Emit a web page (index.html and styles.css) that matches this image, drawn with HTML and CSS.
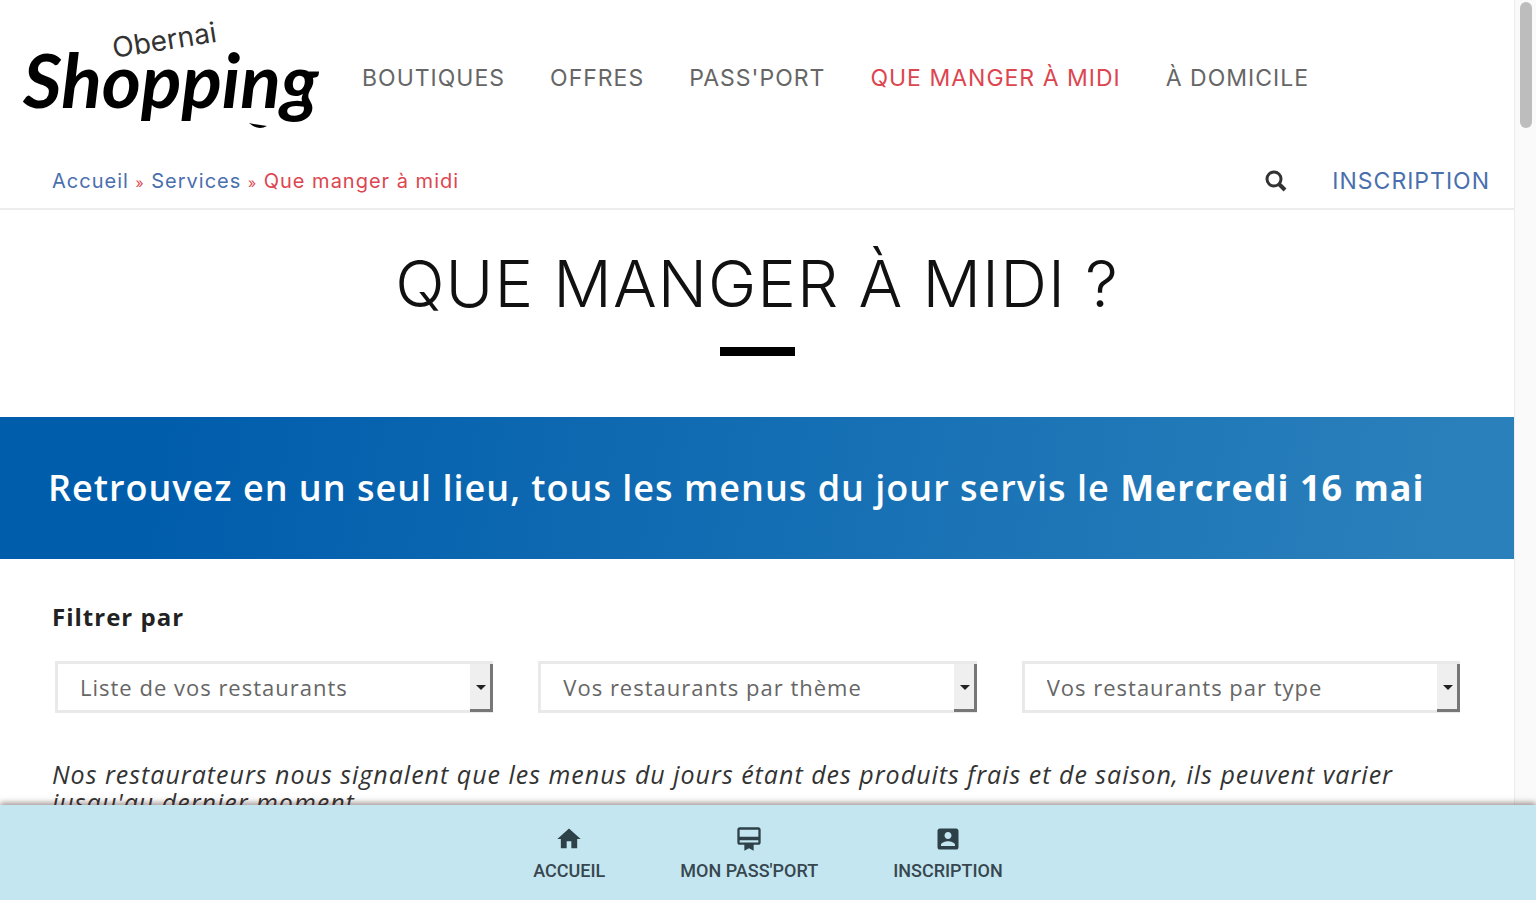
FILE: index.html
```html
<!DOCTYPE html>
<html lang="fr">
<head>
<meta charset="utf-8">
<meta name="viewport" content="width=device-width, initial-scale=1">
<title>Que manger à midi ? – Obernai Shopping</title>
<link rel="stylesheet" href="styles.css">
</head>
<body>
<div class="app">
  <div class="viewport">
    <div class="page">
      <header class="header">
        <div class="header-main">
          <a class="logo" href="#" aria-label="Obernai Shopping">
            <svg class="logo-art" viewBox="0 0 300 120" aria-hidden="true">
              <text class="logo-town" x="94" y="40" transform="rotate(-9 94 40)">Obernai</text>
              <text class="logo-word" x="3" y="90">Shopping</text>
              <path d="M229 105q9 8 18 3q-9 -1 -18 -3z" fill="#000"/>
            </svg>
          </a>
          <nav class="nav" aria-label="Navigation principale">
            <a href="#">BOUTIQUES</a>
            <a href="#">OFFRES</a>
            <a href="#">PASS'PORT</a>
            <a class="is-active" href="#">QUE MANGER À MIDI</a>
            <a href="#">À DOMICILE</a>
          </nav>
        </div>
        <div class="header-sub">
          <nav class="crumbs" aria-label="Fil d'Ariane">
            <a href="#">Accueil</a> <span class="sep">»</span> <a href="#">Services</a> <span class="sep">»</span> <span>Que manger à midi</span>
          </nav>
          <div class="tools">
            <button class="search" type="button" aria-label="Rechercher">
              <svg viewBox="0 0 22 22" width="22" height="22" aria-hidden="true">
                <circle cx="9" cy="9" r="7" fill="none" stroke="#333" stroke-width="3"/>
                <path d="M14 14l6 6" fill="none" stroke="#333" stroke-width="4"/>
              </svg>
            </button>
            <a class="signup" href="#">INSCRIPTION</a>
          </div>
        </div>
      </header>
      <main>
        <div class="title">
          <h1>QUE MANGER À MIDI ?</h1>
        </div>
        <p class="banner">Retrouvez en un seul lieu, tous les menus du jour servis le <strong>Mercredi 16 mai</strong></p>
        <section class="filters">
          <h2>Filtrer par</h2>
          <div class="filter-row">
            <div class="picker">
              <select aria-label="Liste de vos restaurants"><option>Liste de vos restaurants</option></select>
            </div>
            <div class="picker">
              <select aria-label="Vos restaurants par thème"><option>Vos restaurants par thème</option></select>
            </div>
            <div class="picker">
              <select aria-label="Vos restaurants par type"><option>Vos restaurants par type</option></select>
            </div>
          </div>
          <p class="note">Nos restaurateurs nous signalent que les menus du jours étant des produits frais et de saison, ils peuvent varier jusqu'au dernier moment.</p>
        </section>
      </main>
    </div>
    <div class="scrollbar" aria-hidden="true"><div class="thumb"></div></div>
  </div>
  <nav class="tabbar" aria-label="Raccourcis">
    <a href="#">
      <svg viewBox="0 0 24 24" aria-hidden="true"><path d="M10 20v-6h4v6h5v-8h3L12 3 2 12h3v8z"/></svg>
      <span>ACCUEIL</span>
    </a>
    <a href="#">
      <svg viewBox="0 0 24 24" aria-hidden="true"><path d="M20 2H4c-1.110 0-2 .89-2 2v11c0 1.110.89 2 2 2h4v5l4-2 4 2v-5h4c1.110 0 2-.89 2-2V4c0-1.110-.89-2-2-2zm0 13H4v-2h16v2zm0-5H4V4h16v6z"/></svg>
      <span>MON PASS'PORT</span>
    </a>
    <a href="#">
      <svg viewBox="0 0 24 24" aria-hidden="true"><path d="M3 5v14c0 1.100.89 2 2 2h14c1.100 0 2-.9 2-2V5c0-1.100-.9-2-2-2H5c-1.110 0-2 .9-2 2zm12 4c0 1.660-1.340 3-3 3s-3-1.340-3-3 1.340-3 3-3 3 1.340 3 3zm-9 8c0-2 4-3.100 6-3.100s6 1.100 6 3.100v1H6v-1z"/></svg>
      <span>INSCRIPTION</span>
    </a>
  </nav>
</div>
</body>
</html>
```
FILE: styles.css
```css
:root {
  --tracking: 1px;
  --blue: #4a6fae;
  --red: #dc4650;
  --geo: Inter, Lato, sans-serif;
  --text: "Open Sans", "Noto Sans", sans-serif;
}

* { box-sizing: border-box; }

body {
  margin: 0;
  background: #fff;
  color: #222;
  font-family: var(--text);
  letter-spacing: var(--tracking);
}

a { color: inherit; text-decoration: none; }

.app {
  display: flex;
  flex-direction: column;
  height: 100vh;
  overflow: hidden;
}

.viewport {
  display: flex;
  flex: 1;
  min-height: 0;
}

.page {
  flex: 1;
  min-width: 0;
  overflow: hidden;
}

.scrollbar {
  width: 22px;
  padding: 2px 4px 0 5px;
  background: #fafafa;
  border-left: 1px solid #ececec;
}

.thumb {
  height: 126px;
  border-radius: 6px;
  background: #bdbdbd;
}

.header {
  font-family: var(--geo);
  border-bottom: 2px solid #ededed;
}

.header-main {
  display: flex;
  align-items: center;
  gap: 42px;
  height: 156px;
  padding-left: 20px;
}

.logo { width: 300px; }
.logo-art { display: block; width: 100%; overflow: visible; }

.logo-town {
  font: 400 28px Inter, sans-serif;
  letter-spacing: 0;
  fill: #333;
}

.logo-word {
  font: italic 700 75px Lato, sans-serif;
  letter-spacing: 0;
  fill: #000;
}

.nav {
  display: flex;
  gap: 45px;
  font-size: 23px;
  color: #666;
  white-space: nowrap;
}

.nav .is-active { color: var(--red); }

.header-sub {
  display: flex;
  justify-content: space-between;
  align-items: center;
  height: 50px;
  margin-bottom: 2px;
  padding: 0 24px 0 52px;
  color: var(--red);
}

.crumbs { font-size: 20px; }
.crumbs a, .signup { color: var(--blue); }
.sep { font-size: 14px; }

.tools {
  display: flex;
  align-items: center;
  gap: 45px;
}

.search {
  display: flex;
  padding: 0;
  border: 0;
  background: none;
}

.signup { font-size: 23px; }

.title {
  display: flex;
  flex-direction: column;
  align-items: center;
  gap: 24px;
  padding: 35px 0 61px;
}

.title::after {
  content: "";
  width: 75px;
  height: 9px;
  background: #000;
}

h1 {
  margin: 0;
  font: 300 65px/78px var(--geo);
  color: #111;
}

.banner {
  margin: 0;
  padding: 45px 48px;
  font-size: 36px;
  font-weight: 600;
  line-height: 52px;
  color: #fff;
  background: linear-gradient(100deg, #005dac 10%, #2a80bb 95%);
}

.banner strong { font-weight: 700; }

.filters { padding: 40px 54px 0 52px; }

h2 {
  margin: 0 0 26px;
  font-size: 24px;
  font-weight: 700;
  line-height: 36px;
}

.filter-row {
  display: grid;
  grid-template-columns: repeat(3, 1fr);
  gap: 45px;
  padding-left: 3px;
}

.picker {
  position: relative;
  height: 52px;
}

.picker select {
  appearance: none;
  width: 100%;
  height: 100%;
  padding: 0 32px 0 22px;
  border: 3px solid #e9e9e9;
  border-radius: 0;
  background: #fff;
  color: #666;
  font: 400 22px var(--text);
  letter-spacing: var(--tracking);
}

/* Raised drop-down button at the right end of each list */
.picker::before {
  content: "";
  position: absolute;
  top: 3px;
  right: 0;
  bottom: 1px;
  width: 20px;
  border: solid #777;
  border-width: 0 3px 3px 0;
  background: #efefef;
  pointer-events: none;
}

.picker::after {
  content: "";
  position: absolute;
  top: 24px;
  right: 7px;
  border: 5px solid transparent;
  border-top-color: #222;
  border-bottom: 0;
  pointer-events: none;
}

.note {
  margin: 47px 0 0;
  font-size: 25px;
  font-style: italic;
  line-height: 28px;
  color: #333;
}

.tabbar {
  position: relative;
  display: flex;
  justify-content: center;
  gap: 75px;
  height: 95px;
  padding-top: 20px;
  background: #c4e6f0;
  box-shadow: 0 -2px 6px rgba(60, 30, 30, .5);
  color: #37474f;
  font: 500 18px/24px Roboto, sans-serif;
  letter-spacing: 0;
}

.tabbar a {
  display: flex;
  flex-direction: column;
  align-items: center;
  gap: 6px;
}

.tabbar svg {
  width: 28px;
  height: 28px;
  fill: #2f4148;
}
```
